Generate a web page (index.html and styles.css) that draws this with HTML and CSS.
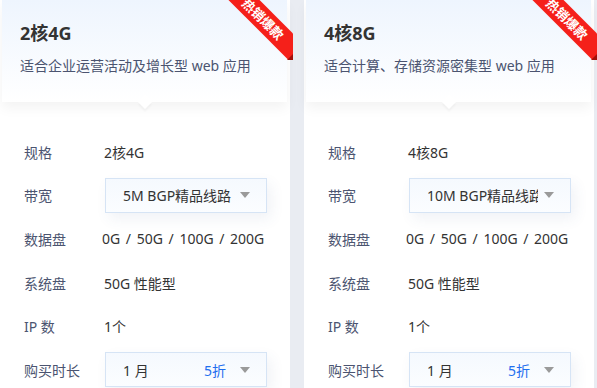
FILE: index.html
```html
<!DOCTYPE html>
<html lang="zh-CN">
<head>
    <meta charset="UTF-8">
    <meta name="viewport" content="width=device-width, initial-scale=1.0">
    <title>云服务器套餐</title>
    <link rel="stylesheet" href="styles.css">
</head>
<body>
    <div class="plans">
        <!-- 套餐一 -->
        <div class="plan">
            <div class="plan-head">
                <h2 class="plan-title">2核4G</h2>
                <p class="plan-desc">适合企业运营活动及增长型 web 应用</p>
                <div class="ribbon"><span>热销爆款</span></div>
            </div>
            <div class="plan-body">
                <div class="row"><span class="label">规格</span><span class="value">2核4G</span></div>
                <div class="row">
                    <span class="label">带宽</span>
                    <div class="select"><span class="select-text">5M BGP精品线路</span><i class="caret"></i></div>
                </div>
                <div class="row"><span class="label">数据盘</span><span class="value sizes">0G / 50G / 100G / 200G</span></div>
                <div class="row"><span class="label">系统盘</span><span class="value">50G 性能型</span></div>
                <div class="row"><span class="label">IP 数</span><span class="value">1个</span></div>
                <div class="row">
                    <span class="label">购买时长</span>
                    <div class="select"><span class="select-text">1 月</span><span class="discount">5折</span><i class="caret"></i></div>
                </div>
            </div>
        </div>

        <!-- 套餐二 -->
        <div class="plan">
            <div class="plan-head">
                <h2 class="plan-title">4核8G</h2>
                <p class="plan-desc">适合计算、存储资源密集型 web 应用</p>
                <div class="ribbon"><span>热销爆款</span></div>
            </div>
            <div class="plan-body">
                <div class="row"><span class="label">规格</span><span class="value">4核8G</span></div>
                <div class="row">
                    <span class="label">带宽</span>
                    <div class="select"><span class="select-text">10M BGP精品线路</span><i class="caret"></i></div>
                </div>
                <div class="row"><span class="label">数据盘</span><span class="value sizes">0G / 50G / 100G / 200G</span></div>
                <div class="row"><span class="label">系统盘</span><span class="value">50G 性能型</span></div>
                <div class="row"><span class="label">IP 数</span><span class="value">1个</span></div>
                <div class="row">
                    <span class="label">购买时长</span>
                    <div class="select"><span class="select-text">1 月</span><span class="discount">5折</span><i class="caret"></i></div>
                </div>
            </div>
        </div>
    </div>
</body>
</html>
```

FILE: styles.css
```css
body {
    margin: 0;
    background: #e9ecf2;
    font-family: "Noto Sans", "Noto Sans CJK SC", sans-serif;
    overflow: hidden;
}

.plans {
    display: flex;
    gap: 14px;
}

.plan {
    width: 290px;
    height: 388px;
    background: #fff;
    flex-shrink: 0;
}

.plan-head {
    position: relative;
    margin: 0 3px 0 2px;
    padding: 20px 18px 26px;
    background: linear-gradient(#eef5fe, #fff);
    box-shadow: 0 6px 12px rgba(0, 0, 0, 0.05);
}

/* little arrow under the head */
.plan-head::after {
    content: "";
    position: absolute;
    left: 50%;
    bottom: -5px;
    width: 10px;
    height: 10px;
    margin-left: -5px;
    background: #fff;
    transform: rotate(45deg);
    box-shadow: 2px 2px 2px rgba(0, 0, 0, 0.03);
}

.plan-title {
    margin: 0;
    font-size: 18px;
    line-height: 26px;
    font-weight: bold;
    color: #333;
}

.plan-desc {
    margin: 10px 0 0;
    font-size: 14px;
    line-height: 20px;
    color: #4b5470;
}

.ribbon {
    position: absolute;
    top: 0;
    right: -6px;
    width: 66px;
    height: 60px;
    overflow: hidden;
}

.ribbon span {
    position: absolute;
    left: -14px;
    top: 8px;
    width: 100px;
    height: 22px;
    line-height: 22px;
    text-align: center;
    background: #f5201a;
    color: #fff;
    font-size: 13px;
    font-weight: bold;
    transform: rotate(45deg);
}

.ribbon::after {
    content: "";
    position: absolute;
    right: 0;
    bottom: 0;
    border-left: 6px solid transparent;
    border-bottom: 6px solid #a30f0a;
}

.plan-body {
    padding: 32px 22px 0 24px;
}

.row {
    display: flex;
    align-items: center;
    height: 35px;
    margin-bottom: 8.7px;
    font-size: 14px;
}

.label {
    width: 80px;
    color: #4b5470;
}

.value {
    color: #333;
}

.sizes {
    margin-left: -2px;
    word-spacing: 2px;
}

.select {
    display: flex;
    align-items: center;
    width: 162px;
    height: 35px;
    box-sizing: border-box;
    padding: 0 16px 0 17px;
    margin-left: 1px;
    border: 1px solid #d6e4f5;
    background: linear-gradient(#f5f9fe, #fbfdff);
    box-shadow: 4px 6px 14px rgba(60, 90, 140, 0.08);
}

.select-text {
    flex: 1;
    color: #333;
    white-space: nowrap;
    overflow: hidden;
}

.discount {
    color: #1f6fef;
    margin-right: 8px;
}

.caret {
    width: 0;
    height: 0;
    margin-left: 6px;
    border-left: 5px solid transparent;
    border-right: 5px solid transparent;
    border-top: 6px solid #9a9a9a;
}
```
